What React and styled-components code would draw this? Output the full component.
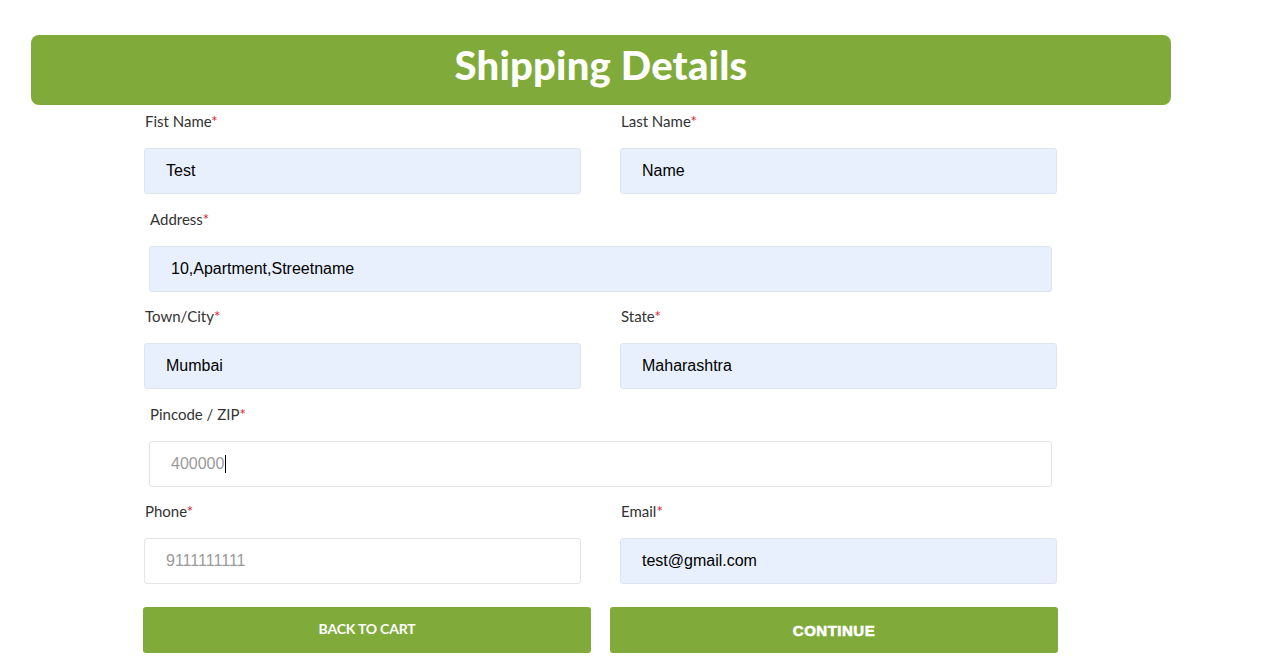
import React from "react";
import styled, { createGlobalStyle } from "styled-components";

const GlobalStyle = createGlobalStyle`
  body {
    margin: 0;
    background: #fff;
    font-family: "Lato", "Liberation Sans", sans-serif;
  }
`;

const fields = [
  { label: "Fist Name", value: "Test", filled: true },
  { label: "Last Name", value: "Name", filled: true },
  { label: "Address", value: "10,Apartment,Streetname", filled: true, wide: true },
  { label: "Town/City", value: "Mumbai", filled: true },
  { label: "State", value: "Maharashtra", filled: true },
  { label: "Pincode / ZIP", value: "400000", wide: true, caret: true },
  { label: "Phone", value: "9111111111" },
  { label: "Email", value: "test@gmail.com", filled: true },
];

const Shipping = () => {
  return (
    <>
      <GlobalStyle />
      <Page>
        <Header>
          <Title>Shipping Details</Title>
        </Header>
        <Form>
          {fields.map((f) => (
            <Field key={f.label} $wide={f.wide}>
              <Label>
                {f.label}
                <Star>*</Star>
              </Label>
              <InputBox $filled={f.filled}>
                {f.value}
                {f.caret && <Caret />}
              </InputBox>
            </Field>
          ))}
        </Form>
        <Actions>
          <Button>BACK TO CART</Button>
          <Button $heavy>CONTINUE</Button>
        </Actions>
      </Page>
    </>
  );
};

const Page = styled.div`
  width: 1140px;
  margin-left: 31px;
  padding-top: 35px;
`;

const Header = styled.div`
  box-sizing: border-box;
  height: 70px;
  padding-bottom: 10px;
  background: #80ab3a;
  border-radius: 8px;
  display: flex;
  align-items: center;
  justify-content: center;
`;

const Title = styled.h1`
  margin: 0;
  color: #fff;
  font-family: "Lato", sans-serif;
  font-weight: 900;
  font-size: 40px;
  letter-spacing: 0.2px;
  line-height: 1;
`;

const Form = styled.div`
  width: 914px;
  margin: 6px auto 0;
  display: grid;
  grid-template-columns: 437px 437px;
  column-gap: 39px;
  row-gap: 14.5px;
`;

const Field = styled.div`
  grid-column: ${(p) => (p.$wide ? "1 / span 2" : "auto")};
  padding: ${(p) => (p.$wide ? "0 5px" : "0")};
  display: flex;
  flex-direction: column;
`;

const Label = styled.label`
  height: 20px;
  line-height: 20px;
  padding-left: 1px;
  margin-bottom: 17px;
  font-size: 15px;
  color: #333;
  font-family: "Lato", sans-serif;
`;

const Star = styled.span`
  color: #e0182d;
`;

const InputBox = styled.div`
  box-sizing: border-box;
  height: 46px;
  padding-left: 21px;
  display: flex;
  align-items: center;
  border-radius: 3px;
  border: 1px solid ${(p) => (p.$filled ? "#dfe5ee" : "#e4e4e4")};
  background: ${(p) => (p.$filled ? "#e8f0fe" : "#fff")};
  color: ${(p) => (p.$filled ? "#000" : "#9a9a9a")};
  font-family: "Liberation Sans", Arial, sans-serif;
  font-size: 16px;
`;

const Caret = styled.span`
  display: inline-block;
  width: 1px;
  height: 18px;
  background: #000;
  margin-left: 1px;
`;

const Actions = styled.div`
  width: 916px;
  margin: 23px auto 0;
  display: grid;
  grid-template-columns: 448px 448px;
  column-gap: 19px;
`;

const Button = styled.button`
  height: 46px;
  border: none;
  border-radius: 3px;
  background: #80ab3a;
  color: #fff;
  cursor: pointer;
  font-family: ${(p) =>
    p.$heavy ? '"Liberation Sans", Arial, sans-serif' : '"Lato", sans-serif'};
  font-weight: ${(p) => (p.$heavy ? 900 : 700)};
  font-size: ${(p) => (p.$heavy ? "15px" : "14px")};
  letter-spacing: ${(p) => (p.$heavy ? "0.5px" : "-0.2px")};
  -webkit-text-stroke: ${(p) => (p.$heavy ? "0.6px #fff" : "0")};
  padding: ${(p) => (p.$heavy ? "0" : "0 0 4px")};
`;

export default Shipping;
